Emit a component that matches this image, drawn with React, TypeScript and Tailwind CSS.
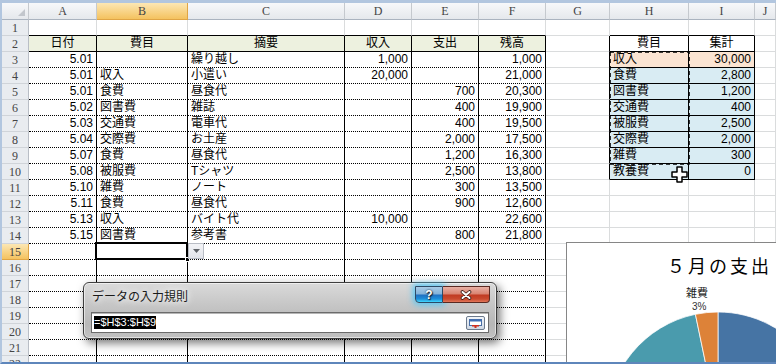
import React from "react";

const COLS = ["A", "B", "C", "D", "E", "F", "G", "H", "I", "J"];
const ROWS = Array.from({ length: 22 }, (_, i) => i + 1);

// 日付, 費目, 摘要, 収入, 支出, 残高
const ledger = [
  ["5.01", "", "繰り越し", "1,000", "", "1,000"],
  ["5.01", "収入", "小遣い", "20,000", "", "21,000"],
  ["5.01", "食費", "昼食代", "", "700", "20,300"],
  ["5.02", "図書費", "雑誌", "", "400", "19,900"],
  ["5.03", "交通費", "電車代", "", "400", "19,500"],
  ["5.04", "交際費", "お土産", "", "2,000", "17,500"],
  ["5.07", "食費", "昼食代", "", "1,200", "16,300"],
  ["5.08", "被服費", "Tシャツ", "", "2,500", "13,800"],
  ["5.10", "雑費", "ノート", "", "300", "13,500"],
  ["5.11", "食費", "昼食代", "", "900", "12,600"],
  ["5.13", "収入", "バイト代", "10,000", "", "22,600"],
  ["5.15", "図書費", "参考書", "", "800", "21,800"],
];

const summary = [
  ["収入", "30,000"],
  ["食費", "2,800"],
  ["図書費", "1,200"],
  ["交通費", "400"],
  ["被服費", "2,500"],
  ["交際費", "2,000"],
  ["雑費", "300"],
  ["教養費", "0"],
];

const heads: Record<number, string> = {
  1: "日付",
  2: "費目",
  3: "摘要",
  4: "収入",
  5: "支出",
  6: "残高",
  8: "費目",
  9: "集計",
};

type Align = "l" | "r" | "c";

function cellAt(r: number, c: number): { text: string; align: Align } {
  if (r === 2) return { text: heads[c] ?? "", align: "c" };
  if (r >= 3 && r <= 14 && c >= 1 && c <= 6) {
    return { text: ledger[r - 3][c - 1], align: c === 2 || c === 3 ? "l" : "r" };
  }
  if (r >= 3 && r <= 10 && (c === 8 || c === 9)) {
    return { text: summary[r - 3][c - 8], align: c === 8 ? "l" : "r" };
  }
  return { text: "", align: "l" };
}

function bgClass(r: number, c: number) {
  if (r === 2 && c >= 1 && c <= 6) return "bg-[#edf1df]";
  if (r === 3 && (c === 8 || c === 9)) return "bg-[#fbe4d2]";
  if (r >= 4 && r <= 10 && (c === 8 || c === 9)) return "bg-[#d9ecf3]";
  return "bg-white";
}

function borderClass(r: number, c: number) {
  const main = c >= 1 && c <= 6 && r >= 2;
  const sum = (c === 8 || c === 9) && r >= 2 && r <= 10;
  const right =
    main || sum || (c === 7 && r >= 2 && r <= 10)
      ? "border-r border-r-black"
      : "border-r border-r-[#dadcdd]";
  let bottom = "border-b border-b-[#dadcdd]";
  if (r === 1 && ((c >= 1 && c <= 6) || c === 8 || c === 9)) bottom = "border-b border-b-black";
  else if (sum || (main && r === 2)) bottom = "border-b border-b-black";
  else if (main) bottom = "[border-bottom:1px_dotted_#000]";
  return `${right} ${bottom}`;
}

function SheetCell({ r, c }: { r: number; c: number }) {
  const cell = cellAt(r, c);
  const active = r === 15 && c === 2;
  const align =
    cell.align === "r" ? "justify-end" : cell.align === "c" ? "justify-center" : "justify-start";
  return (
    <div
      className={`${active ? "relative" : ""} flex h-[16px] items-end whitespace-nowrap px-[3px] text-[12px] leading-[15px] text-black ${align} ${bgClass(r, c)} ${borderClass(r, c)}`}
    >
      {cell.text}
      {active && (
        <>
          <div className="absolute -bottom-[1px] -left-[2px] -right-[1px] -top-[2px] border-2 border-black" />
          <div className="absolute -bottom-[3px] -right-[3px] h-[5px] w-[5px] border border-white bg-black" />
          <div className="absolute -top-[1px] left-[calc(100%+1px)] z-10 flex h-[16px] w-[16px] items-center justify-center border border-[#b9bdc5] bg-[linear-gradient(180deg,#f3f4f7,#e2e4ea)]">
            <svg width="7" height="4" viewBox="0 0 7 4">
              <path d="M0 0 H7 L3.5 4 Z" fill="#5f6368" />
            </svg>
          </div>
        </>
      )}
    </div>
  );
}

function ColHead({ label }: { label: string }) {
  const sel = label === "B";
  return (
    <div
      className={`flex h-[17px] items-center justify-center border-b border-r font-['Liberation_Serif',serif] text-[12px] text-[#444] ${
        sel
          ? "border-b-[#e0a545] border-r-[#e0a545] bg-[linear-gradient(180deg,#fce7b4,#f4c25f)]"
          : "border-b-[#aab3bf] border-r-[#c5c9ce] bg-[linear-gradient(180deg,#f7f8fa,#e5e8ec)]"
      }`}
    >
      {label}
    </div>
  );
}

function RowHead({ r }: { r: number }) {
  const sel = r === 15;
  return (
    <div
      className={`flex h-[16px] items-center justify-center border-b border-r font-['Liberation_Serif',serif] text-[12px] text-[#444] ${
        sel
          ? "border-b-[#e0a545] border-r-[#e0a545] bg-[linear-gradient(180deg,#fce7b4,#f4c25f)]"
          : "border-b-[#d0d4d9] border-r-[#b9bec6] bg-[#e9ecf0]"
      }`}
    >
      {r}
    </div>
  );
}

const pie = [
  { v: 2800, color: "#4674a4" },
  { v: 1200, color: "#b5504d" },
  { v: 400, color: "#97b655" },
  { v: 2500, color: "#7c64a0" },
  { v: 2000, color: "#4a9bad" },
  { v: 300, color: "#dd8238" },
];

function slicePath(cx: number, cy: number, r: number, a0: number, a1: number) {
  const p = (a: number) => {
    const t = (a * Math.PI) / 180;
    return `${cx + r * Math.sin(t)} ${cy - r * Math.cos(t)}`;
  };
  const large = a1 - a0 > 180 ? 1 : 0;
  return `M${cx} ${cy} L${p(a0)} A${r} ${r} 0 ${large} 1 ${p(a1)} Z`;
}

function Chart() {
  const total = pie.reduce((s, d) => s + d.v, 0);
  let acc = 0;
  const slices = pie.map((d) => {
    const a0 = (acc / total) * 360;
    acc += d.v;
    return { ...d, a0, a1: (acc / total) * 360 };
  });
  return (
    <div className="absolute left-[564px] top-[239px] z-10 h-[140px] w-[240px] border-l border-t border-[#868686] bg-white">
      <svg className="absolute left-0 top-0" width="240" height="140">
        {slices.map((s, i) => (
          <path key={i} d={slicePath(151, 180, 111, s.a0, s.a1)} fill={s.color} stroke="#fff" strokeWidth="0.75" />
        ))}
      </svg>
      <div className="absolute left-[100px] top-[12px] whitespace-nowrap font-['Noto_Sans_CJK_JP',sans-serif] text-[18px] leading-[20px] tracking-[3px] text-black">
        ５月の支出
      </div>
      <div className="absolute left-[119px] top-[42px] font-['Noto_Sans_CJK_JP',sans-serif] text-[11px] leading-[14px] text-[#222]">
        雑費
      </div>
      <div className="absolute left-[125px] top-[58px] text-[10px] leading-[12px] text-[#333]">3%</div>
    </div>
  );
}

function Dialog() {
  return (
    <div className="absolute left-[81px] top-[279px] z-20 flex h-[57px] w-[414px] flex-col rounded-[6px] border border-[#3f3f3f] bg-[linear-gradient(180deg,#dadada_0%,#c6c6c6_40%,#b7b7b7_75%,#c2c2c2_100%)] shadow-[3px_4px_10px_rgba(0,0,0,0.55),inset_0_0_0_1px_rgba(255,255,255,0.55)]">
      <div className="flex h-[29px] items-start justify-between">
        <span className="ml-[8px] mt-[5px] font-['Noto_Sans_CJK_JP',sans-serif] text-[12px] leading-[16px] text-[#1a1a1a] [text-shadow:0_0_6px_#fff,0_0_10px_#fff]">
          データの入力規則
        </span>
        <div className="mr-[6px] mt-[3px] flex h-[17px]">
          <div className="flex h-[17px] w-[28px] items-center justify-center rounded-bl-[4px] border border-[#2c4a66] bg-[linear-gradient(180deg,#a9cbe6_0%,#82b2d9_48%,#1f6fc0_52%,#1d8fd9_80%,#43d9ff_100%)] shadow-[0_0_6px_2px_rgba(64,200,255,0.85)]">
            <span className="font-['Liberation_Sans',sans-serif] text-[12px] font-bold leading-none text-white [text-shadow:0_0_2px_#123,1px_1px_1px_#123]">
              ?
            </span>
          </div>
          <div className="flex h-[17px] w-[47px] items-center justify-center rounded-br-[4px] border border-l-0 border-[#5a2a22] bg-[linear-gradient(180deg,#e9b0a4_0%,#d9826f_48%,#c03a22_52%,#c94a2f_80%,#e2775a_100%)]">
            <svg width="12" height="10" viewBox="0 0 12 10">
              <path d="M2.5 2 L9.5 8 M9.5 2 L2.5 8" stroke="#3a1a14" strokeWidth="3.6" strokeLinecap="round" />
              <path d="M2.5 2 L9.5 8 M9.5 2 L2.5 8" stroke="#fff" strokeWidth="2" strokeLinecap="round" />
            </svg>
          </div>
        </div>
      </div>
      <div className="mx-[7px] flex h-[21px] items-center justify-between border border-[#6b6b6b] bg-white pl-[2px] pr-[3px] shadow-[inset_0_1px_0_#b5b5b5]">
        <span className="bg-black font-['Liberation_Sans',sans-serif] text-[11px] leading-[13px] text-white">
          =$H$3:$H$9
        </span>
        <svg width="19" height="14" viewBox="0 0 19 14">
          <defs>
            <linearGradient id="cb" x1="0" y1="0" x2="0" y2="1">
              <stop offset="0" stopColor="#f3f6fa" />
              <stop offset="1" stopColor="#cfd8e4" />
            </linearGradient>
          </defs>
          <rect x="0.5" y="0.5" width="18" height="13" rx="1.5" fill="url(#cb)" stroke="#6c7a8c" />
          <rect x="3.5" y="3.5" width="12" height="6" fill="#fff" stroke="#4a6fa5" />
          <rect x="3.5" y="3.5" width="12" height="2" fill="#3f6fb5" />
          <rect x="6" y="9" width="7" height="1.5" fill="#d03020" />
          <rect x="8.5" y="9" width="2" height="3" fill="#d03020" />
        </svg>
      </div>
    </div>
  );
}

export default function App() {
  return (
    <div className="relative h-[364px] w-[776px] overflow-hidden border-b-2 border-l-2 border-t-[3px] border-b-[#5e86bb] border-l-[#b2c6df] border-t-[#b2c6df] bg-white font-['Liberation_Sans','Noto_Sans_CJK_JP',sans-serif]">
      <div className="grid grid-cols-[27px_68px_91px_157px_67px_67px_67px_64px_79px_66px_1fr]">
        <div className="flex h-[17px] items-end justify-end border-b border-r border-b-[#aab3bf] border-r-[#c5c9ce] bg-[linear-gradient(180deg,#f7f8fa,#e5e8ec)] pb-[3px] pr-[3px]">
          <svg width="7" height="7" viewBox="0 0 7 7">
            <path d="M7 0 V7 H0 Z" fill="#c2c6cc" />
          </svg>
        </div>
        {COLS.map((l) => (
          <ColHead key={l} label={l} />
        ))}
        {ROWS.map((r) => (
          <React.Fragment key={r}>
            <RowHead r={r} />
            {COLS.map((_, i) => (
              <SheetCell key={i} r={r} c={i + 1} />
            ))}
          </React.Fragment>
        ))}
      </div>

      {/* copy range H3:H9 */}
      <svg className="absolute left-[607px] top-[48px]" width="81" height="114">
        <rect x="1" y="1" width="79" height="112" fill="none" stroke="#000" strokeWidth="1.6" strokeDasharray="4 3" />
      </svg>

      {/* cell cursor */}
      <svg className="absolute left-[669px] top-[163px] z-10" width="17" height="17" viewBox="0 0 17 17">
        <path
          d="M6 1 H11 V6 H16 V11 H11 V16 H6 V11 H1 V6 H6 Z"
          fill="#fff"
          stroke="#000"
          strokeWidth="1.5"
          strokeLinejoin="round"
        />
      </svg>

      <Chart />
      <Dialog />
    </div>
  );
}
